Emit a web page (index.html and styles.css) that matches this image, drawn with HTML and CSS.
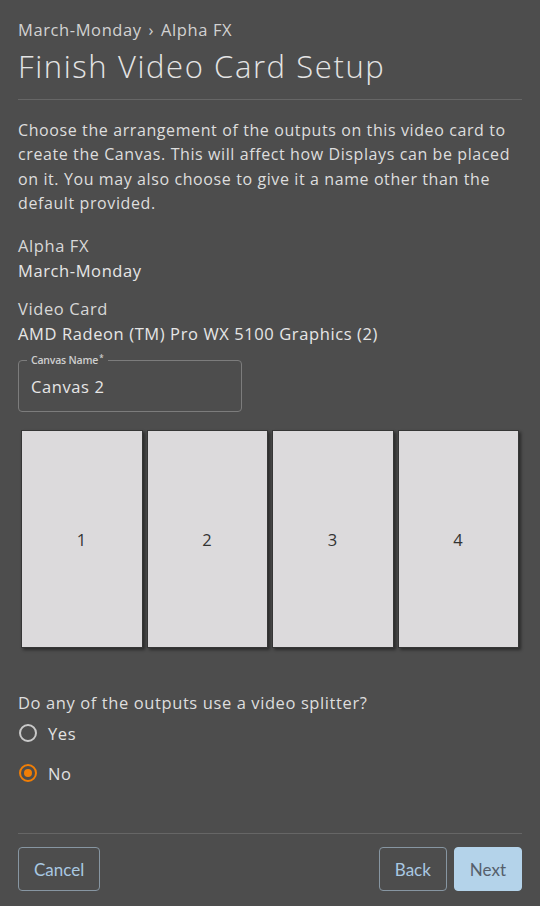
FILE: index.html
```html
<!DOCTYPE html>
<html>
<head>
<meta charset="utf-8">
<link rel="stylesheet" href="styles.css">
</head>
<body>
<div class="page">
  <div class="crumbs">March-Monday <span class="sep">›</span> Alpha FX</div>
  <h1 class="title">Finish Video Card Setup</h1>
  <hr class="rule">
  <p class="intro">Choose the arrangement of the outputs on this video card to create the Canvas. This will affect how Displays can be placed on it. You may also choose to give it a name other than the default provided.</p>
  <div class="info">
    <div class="info-label">Alpha FX</div>
    <div class="info-value">March-Monday</div>
  </div>
  <div class="info">
    <div class="info-label">Video Card</div>
    <div class="info-value">AMD Radeon (TM) Pro WX 5100 Graphics (2)</div>
  </div>
  <div class="field">
    <span class="field-label">Canvas Name<sup class="req">*</sup></span>
    <div class="field-value">Canvas 2</div>
  </div>
  <div class="outputs">
    <div class="output">1</div>
    <div class="output">2</div>
    <div class="output">3</div>
    <div class="output">4</div>
  </div>
  <div class="question">Do any of the outputs use a video splitter?</div>
  <div class="radios">
    <div class="radio-row"><span class="radio"></span><span class="radio-text">Yes</span></div>
    <div class="radio-row"><span class="radio checked"></span><span class="radio-text">No</span></div>
  </div>
  <hr class="rule footer-rule">
  <div class="actions">
    <button class="btn btn-outline">Cancel</button>
    <div class="actions-right">
      <button class="btn btn-outline">Back</button>
      <button class="btn btn-primary">Next</button>
    </div>
  </div>
</div>
</body>
</html>
```
FILE: styles.css
```css
html, body {
  margin: 0;
  padding: 0;
  background: #4d4d4d;
}
body {
  font-family: "Open Sans", "Noto Sans", sans-serif;
  color: #dedede;
  font-size: 16.5px;
  letter-spacing: 0.6px;
}
.page {
  padding: 18px 18px 0 18px;
  width: 504px;
}
.crumbs {
  line-height: 24px;
  font-weight: 500;
  color: #d2d2d2;
}
.sep {
  padding: 0 2px;
}
.title {
  margin: 6px 0 0 0;
  font-size: 31px;
  line-height: 36px;
  font-weight: 300;
  letter-spacing: 1.6px;
  color: #e4e4e4;
}
.rule {
  margin: 15px 0 0 0;
  border: 0;
  height: 1px;
  background: #666666;
}
.intro {
  margin: 18px 0 0 0;
  font-size: 16px;
  line-height: 24.3px;
}
.info {
  margin-top: 18px;
  line-height: 25px;
}
.info + .info {
  margin-top: 13px;
}
.info-label {
  color: #d8d8d8;
}
.info-value {
  color: #e6e6e6;
}
.field {
  position: relative;
  margin-top: 14px;
  width: 222px;
  height: 50px;
  border: 1px solid #7c7c7c;
  border-radius: 4px;
}
.field-label {
  position: absolute;
  top: -8px;
  left: 8px;
  padding: 0 5px 0 4px;
  background: #4d4d4d;
  font-size: 10.5px;
  line-height: 14px;
  font-weight: 600;
  letter-spacing: -0.2px;
  color: #cfcfcf;
}
.req {
  font-size: 8px;
  vertical-align: top;
  line-height: 10px;
  margin-left: 1px;
}
.field-value {
  padding: 14px 12px 0 12px;
  line-height: 24px;
  color: #e6e6e6;
}
.outputs {
  margin-top: 18px;
  display: flex;
  gap: 4px;
  padding: 0 3px;
}
.output {
  flex: 1;
  height: 216px;
  background: #dcdadc;
  border: 1px solid #363636;
  box-shadow: 2px 2px 3px rgba(0, 0, 0, 0.45);
  display: flex;
  align-items: center;
  justify-content: center;
  color: #333333;
}
.question {
  margin-top: 43px;
  line-height: 24px;
}
.radios {
  margin-top: -2px;
}
.radio-row {
  display: flex;
  align-items: center;
  height: 40px;
}
.radio {
  box-sizing: border-box;
  width: 18px;
  height: 18px;
  margin-left: 1px;
  border: 2px solid #c9c9c9;
  border-radius: 50%;
  display: flex;
  align-items: center;
  justify-content: center;
}
.radio.checked {
  border-color: #f07e06;
}
.radio.checked::after {
  content: "";
  width: 8px;
  height: 8px;
  border-radius: 50%;
  background: #f07e06;
}
.radio-text {
  margin-left: 11px;
  color: #e2e2e2;
}
.footer-rule {
  margin-top: 40px;
}
.actions {
  margin-top: 13px;
  display: flex;
  justify-content: space-between;
}
.actions-right {
  display: flex;
  gap: 7px;
}
.btn {
  box-sizing: border-box;
  height: 44px;
  padding: 0 15px;
  border-radius: 4px;
  font-family: "Lato", sans-serif;
  font-size: 17px;
  letter-spacing: 0;
  cursor: pointer;
}
.btn-outline {
  background: transparent;
  border: 1px solid #8796a2;
  color: #a9c8e2;
}
.btn-primary {
  background: #b4d3ea;
  border: 1px solid #b4d3ea;
  color: #56606c;
}
```
